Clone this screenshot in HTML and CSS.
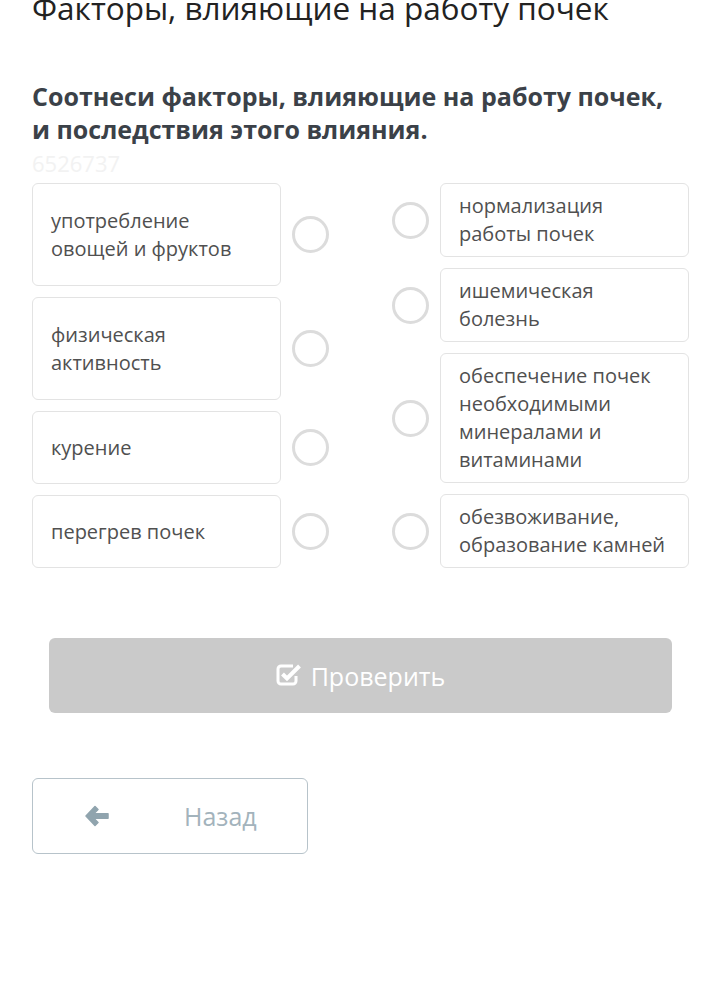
FILE: index.html
```html
<!DOCTYPE html>
<html lang="ru">
<head>
<meta charset="utf-8">
<link rel="stylesheet" href="styles.css">
</head>
<body>
<div class="page">
  <h1 class="title">Факторы, влияющие на работу почек</h1>
  <h2 class="question">Соотнеси факторы, влияющие на работу почек, и последствия этого влияния.</h2>
  <div class="qid">6526737</div>
  <div class="match">
    <div class="col col-left">
      <div class="row grow"><div class="card">употребление овощей и фруктов</div><span class="dot"></span></div>
      <div class="row grow"><div class="card">физическая активность</div><span class="dot"></span></div>
      <div class="row"><div class="card">курение</div><span class="dot"></span></div>
      <div class="row"><div class="card">перегрев почек</div><span class="dot"></span></div>
    </div>
    <div class="col col-right">
      <div class="row"><span class="dot"></span><div class="card">нормализация работы почек</div></div>
      <div class="row"><span class="dot"></span><div class="card">ишемическая болезнь</div></div>
      <div class="row"><span class="dot"></span><div class="card">обеспечение почек необходимыми минералами и витаминами</div></div>
      <div class="row"><span class="dot"></span><div class="card">обезвоживание, образование камней</div></div>
    </div>
  </div>
  <button class="check" type="button">
    <svg class="check-icon" viewBox="0 0 26 26" width="26" height="26" aria-hidden="true">
      <path d="M20 14v5a3 3 0 0 1-3 3H5a3 3 0 0 1-3-3V7a3 3 0 0 1 3-3h12" fill="none" stroke="#fff" stroke-width="3"/>
      <path d="M6.5 12l4.5 4.5L23.5 4" fill="none" stroke="#fff" stroke-width="4" stroke-linejoin="miter"/>
    </svg>
    <span>Проверить</span>
  </button>
  <button class="back" type="button">
    <svg class="back-icon" viewBox="0 0 26 22" width="26" height="22" aria-hidden="true">
      <path d="M11 1.5L2 11l9 9.5 3-3-4.2-4.2H24v-4.6H9.8L14 4.5z" fill="#90a4ae" stroke="#90a4ae" stroke-width="1.5" stroke-linejoin="round"/>
    </svg>
    <span>Назад</span>
  </button>
</div>
</body>
</html>
```

FILE: styles.css
```css
html, body {
  margin: 0;
  padding: 0;
  background: #fff;
}
body {
  font-family: "Open Sans", "Noto Sans", sans-serif;
  overflow: hidden;
}
.page {
  padding: 0 31px 0 32px;
  display: flex;
  flex-direction: column;
  align-items: flex-start;
}
.title {
  margin: -14px 0 0 0;
  font-size: 31.5px;
  font-weight: 400;
  line-height: 44px;
  color: #222;
  white-space: nowrap;
}
.question {
  margin: 50px 0 0 0;
  font-size: 25px;
  font-weight: 700;
  line-height: 33px;
  color: #3b4148;
  width: 645px;
}
.qid {
  margin: 2px 0 0 0;
  font-size: 22px;
  line-height: 30px;
  color: #f2f2f2;
}
.match {
  margin-top: 5px;
  display: grid;
  grid-template-columns: 297px 297px;
  justify-content: space-between;
  width: 657px;
}
.col {
  display: flex;
  flex-direction: column;
  gap: 11px;
}
.row {
  display: flex;
  align-items: center;
  gap: 11px;
  min-height: 73px;
}
.row.grow { flex: 1 1 auto; }
.card {
  box-sizing: border-box;
  width: 250px;
  align-self: stretch;
  display: flex;
  align-items: center;
  padding: 8px 16px 8px 18px;
  border: 1px solid #e3e3e3;
  border-radius: 6px;
  font-size: 20px;
  line-height: 28px;
  color: #505050;
  background: #fff;
}
.dot {
  box-sizing: border-box;
  width: 37px;
  height: 37px;
  flex: none;
  border-radius: 50%;
  border: 3px solid #dcdcdc;
}
.check {
  margin: 70px 0 0 17px;
  width: 623px;
  height: 75px;
  border: none;
  border-radius: 6px;
  background: #cacaca;
  color: #fff;
  font-family: inherit;
  font-size: 25px;
  display: flex;
  align-items: center;
  justify-content: center;
  gap: 9px;
  padding: 0;
}
.check-icon { margin-top: -2px; }
.back {
  margin: 65px 0 0 0;
  box-sizing: border-box;
  width: 276px;
  height: 76px;
  border: 1px solid #b7c3ca;
  border-radius: 6px;
  background: #fff;
  color: #a3b3bc;
  font-family: inherit;
  font-size: 25px;
  display: flex;
  align-items: center;
  padding: 0 0 0 51px;
}
.back-icon { margin-right: 74px; }
```
